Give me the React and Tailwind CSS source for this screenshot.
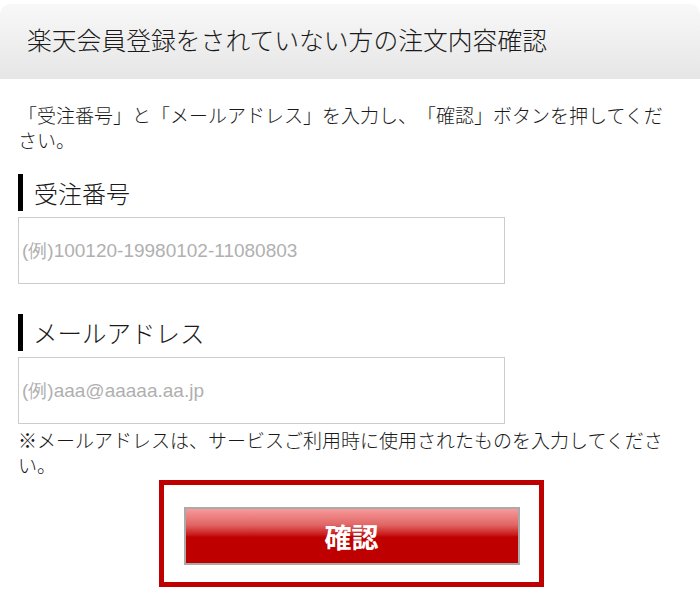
export default function App() {
  return (
    <div className="w-[700px] h-[594px] overflow-hidden bg-white text-[#1a1a1a] font-['Noto_Sans_CJK_JP',sans-serif] [text-spacing-trim:space-all]">
      <div className="mt-[4px] h-[75px] rounded-t-[10px] bg-gradient-to-b from-[#f8f8f8] to-[#e6e6e6] flex items-center pl-[27px] pb-[4px]">
        <h1 className="text-[24.8px] font-light leading-none">楽天会員登録をされていない方の注文内容確認</h1>
      </div>

      <div className="px-[18px]">
        <p className="mt-[23px] w-[655px] text-[19px] leading-[25px] font-light">
          「受注番号」と「メールアドレス」を入力し、「確認」ボタンを押してください。
        </p>

        <h2 className="mt-[22px] h-[37px] border-l-[5px] border-black pl-[11px] text-[24px] leading-[37px] font-light">受注番号</h2>
        <input
          type="text"
          placeholder="(例)100120-19980102-11080803"
          className="mt-[6px] block h-[67px] w-[487px] border border-[#cccccc] px-[3px] text-[19px] font-['Liberation_Sans',sans-serif] placeholder:text-[#b0b0b0] outline-none"
        />

        <h2 className="mt-[30px] h-[37px] border-l-[5px] border-black pl-[10px] text-[24.5px] leading-[37px] font-light">メールアドレス</h2>
        <input
          type="text"
          placeholder="(例)aaa@aaaaa.aa.jp"
          className="mt-[6px] block h-[67px] w-[487px] border border-[#cccccc] px-[3px] text-[19px] font-['Liberation_Sans',sans-serif] placeholder:text-[#b0b0b0] outline-none"
        />
        <p className="mt-[3px] w-[655px] text-[19px] leading-[25px] font-light">
          ※メールアドレスは、サービスご利用時に使用されたものを入力してください。
        </p>
      </div>

      <div className="flex justify-center pl-[3px]">
        <div className="mt-[3px] h-[107px] w-[385px] border-[5px] border-[#bf0000] flex justify-center pt-[22px]">
          <button className="h-[58px] w-[336px] border-2 border-[#aaaaaa] bg-[linear-gradient(to_bottom,#f79a9a_0%,#e06464_30%,#c81818_48%,#bf0000_52%,#bf0000_100%)] text-white text-[27px] font-bold leading-none">
            確認
          </button>
        </div>
      </div>
    </div>
  );
}
